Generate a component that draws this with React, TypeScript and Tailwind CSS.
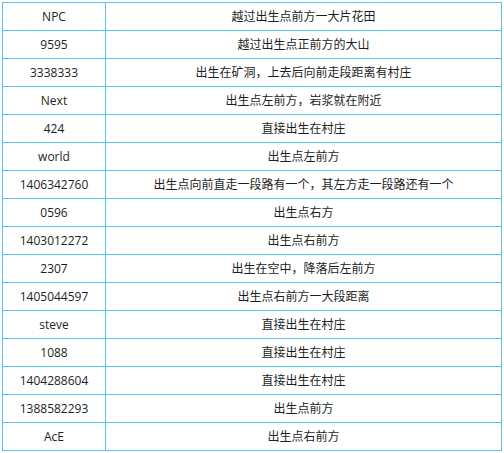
const rows: [string, string][] = [
  ["NPC", "越过出生点前方一大片花田"],
  ["9595", "越过出生点正前方的大山"],
  ["3338333", "出生在矿洞，上去后向前走段距离有村庄"],
  ["Next", "出生点左前方，岩浆就在附近"],
  ["424", "直接出生在村庄"],
  ["world", "出生点左前方"],
  ["1406342760", "出生点向前直走一段路有一个，其左方走一段路还有一个"],
  ["0596", "出生点右方"],
  ["1403012272", "出生点右前方"],
  ["2307", "出生在空中，降落后左前方"],
  ["1405044597", "出生点右前方一大段距离"],
  ["steve", "直接出生在村庄"],
  ["1088", "直接出生在村庄"],
  ["1404288604", "直接出生在村庄"],
  ["1388582293", "出生点前方"],
  ["AcE", "出生点右前方"],
];

const App = () => {
  return (
    <div className="w-[504px] h-[453px] bg-white pt-[2px] pl-[2px]">
      <table
        className="border-collapse w-[500px] text-[12px] text-[#1e1e1e]"
        style={{ fontFamily: '"Open Sans", "Noto Sans CJK SC", sans-serif' }}
      >
        <tbody>
          {rows.map(([seed, desc]) => (
            <tr key={seed} className="h-[28px]">
              <td className="border border-[#55c3fa] w-[103px] p-0 text-center align-middle">{seed}</td>
              <td className="border border-[#55c3fa] p-0 text-center align-middle">{desc}</td>
            </tr>
          ))}
        </tbody>
      </table>
    </div>
  );
};

export default App;
